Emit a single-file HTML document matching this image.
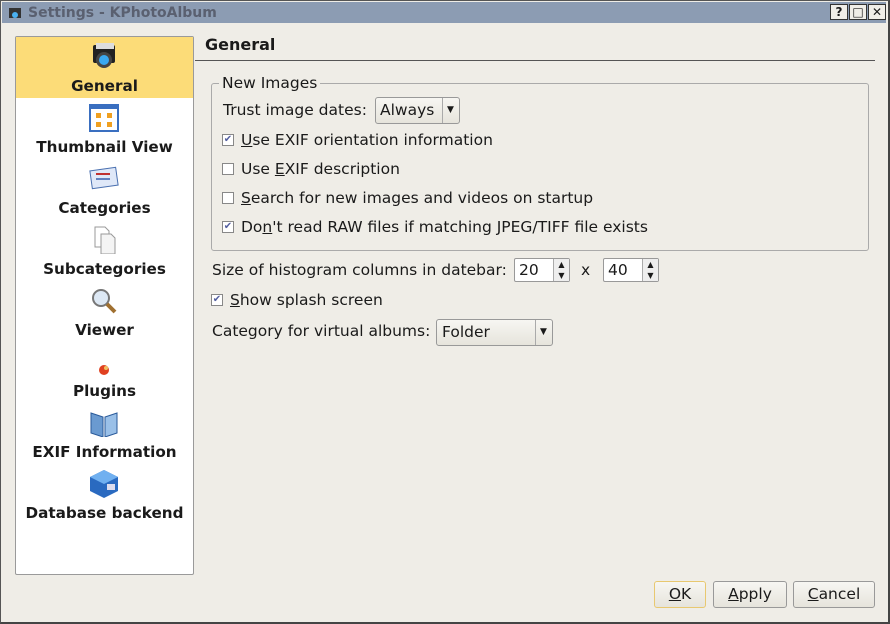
<!DOCTYPE html>
<html><head><style>
*{margin:0;padding:0;box-sizing:border-box}
body{width:890px;height:624px;background:#efede7;font-family:"DejaVu Sans","Liberation Sans",sans-serif;font-size:15.5px;color:#1a1a1a;position:relative;overflow:hidden}
.a{position:absolute;white-space:nowrap}
#win{position:absolute;left:0;top:0;width:890px;height:624px;border:1px solid #555;border-right:2px solid #444;border-bottom:2px solid #444}
#title{position:absolute;left:2px;top:2px;width:884px;height:21px;background:#8c9cb3;}
#title span{position:absolute;left:26px;top:3px;font-weight:bold;color:#5a6070;font-size:14px}
.tb{position:absolute;top:4px;width:18px;height:16px;background:#f0eee8;border:1px solid #333;font-size:12px;font-weight:bold;text-align:center;line-height:14px}
#side{position:absolute;left:15px;top:36px;width:179px;height:539px;background:#fff;border:1px solid #9a9a9a;border-radius:2px}
.it{position:absolute;left:0;width:177px;height:61px;text-align:center;font-weight:bold;font-size:15.2px}
.it b{position:absolute;left:0;right:0;bottom:3px}
.ic{position:absolute;left:73px;top:6px;width:30px;height:28px}
.cb{position:absolute;width:12px;height:12px;border:1px solid #888;background:#fff;font-size:10px;line-height:10px;text-align:center;color:#5560a0}
.btn{position:absolute;height:27px;border:1px solid #999;border-radius:3px;background:linear-gradient(#f7f6f2,#e6e4dc);text-align:center;line-height:25px}
.spin{position:absolute;height:24px;background:#fff;border:1px solid #999;border-radius:2px}
u{text-decoration:underline}
</style></head><body>
<div id="win"></div>
<div id="title"><svg class="a" style="left:5px;top:3px" width="16" height="16"><rect x="2" y="3" width="12" height="10" fill="#333"/><circle cx="8" cy="10" r="3" fill="#4ab0f0"/></svg><span>Settings - KPhotoAlbum</span></div>
<div class="tb" style="left:830px">?</div>
<div class="tb" style="left:849px">□</div>
<div class="tb" style="left:868px">✕</div>

<div id="side">
<div class="it" style="top:0;background:#fcdc78"><svg class="ic" viewBox="0 0 30 28"><rect x="4" y="2" width="22" height="18" fill="#222" rx="2"/><rect x="7" y="0" width="18" height="6" fill="#ddd"/><circle cx="15" cy="17" r="8" fill="#444"/><circle cx="15" cy="17" r="5" fill="#3aa8f0"/></svg><b>General</b></div>
<div class="it" style="top:61px"><svg class="ic" viewBox="0 0 30 28"><rect x="1" y="1" width="28" height="26" fill="#fff" stroke="#3a6fc0" stroke-width="2"/><rect x="1" y="1" width="28" height="4" fill="#3a6fc0"/><rect x="7" y="9" width="5" height="5" fill="#f0a020"/><rect x="18" y="9" width="5" height="5" fill="#f0a020"/><rect x="7" y="18" width="5" height="5" fill="#f0a020"/><rect x="18" y="18" width="5" height="5" fill="#f0a020"/></svg><b>Thumbnail View</b></div>
<div class="it" style="top:122px"><svg class="ic" viewBox="0 0 30 28"><rect x="2" y="4" width="26" height="18" fill="#dfe8f8" stroke="#4a70b0" transform="rotate(-8 15 13)"/><rect x="7" y="8" width="14" height="2" fill="#c03030"/><rect x="7" y="13" width="14" height="2" fill="#6080c0"/></svg><b>Categories</b></div>
<div class="it" style="top:183px"><svg class="ic" viewBox="0 0 30 28"><path d="M6 1h10l4 4v16H6z" fill="#fff" stroke="#999"/><path d="M12 8h10l4 4v16H12z" fill="#f4f4f4" stroke="#999"/></svg><b>Subcategories</b></div>
<div class="it" style="top:244px"><svg class="ic" viewBox="0 0 30 28"><circle cx="12" cy="11" r="8" fill="#dde8f4" stroke="#777" stroke-width="2"/><path d="M18 17l8 8" stroke="#a07030" stroke-width="4"/></svg><b>Viewer</b></div>
<div class="it" style="top:305px"><svg class="ic" viewBox="0 0 30 28"><circle cx="15" cy="22" r="5" fill="#e04020"/><circle cx="17" cy="20" r="2" fill="#f0c060"/></svg><b>Plugins</b></div>
<div class="it" style="top:366px"><svg class="ic" viewBox="0 0 30 28"><path d="M2 4l12 4v20L2 24z" fill="#6a9ad0" stroke="#2a5a9a"/><path d="M28 4l-12 4v20l12-4z" fill="#9ac0e8" stroke="#2a5a9a"/></svg><b>EXIF Information</b></div>
<div class="it" style="top:427px"><svg class="ic" viewBox="0 0 30 28"><path d="M15 0l14 7v14l-14 7-14-7V7z" fill="#2a6ac0"/><path d="M15 0l14 7-14 7-14-7z" fill="#70b0f0"/><rect x="18" y="14" width="8" height="6" fill="#dde"/></svg><b>Database backend</b></div>
</div>

<div class="a" style="left:205px;top:35px;font-weight:bold;font-size:16px">General</div>
<div class="a" style="left:195px;top:60px;width:680px;height:1px;background:#555"></div>

<div class="a" style="left:211px;top:83px;width:658px;height:168px;border:1px solid #aaa;border-radius:3px"></div>
<div class="a" style="left:219px;top:74px;background:#efede7;padding:0 3px">New Images</div>
<div class="a" style="left:223px;top:101px">Trust image dates:</div>
<div class="btn" style="left:375px;top:97px;width:85px;text-align:left;padding-left:4px">Always<span class="a" style="left:66px;top:0;width:1px;height:25px;background:#aaa"></span><span class="a" style="left:71px;top:0;font-size:9px">▼</span></div>
<div class="cb" style="left:222px;top:134px">✔</div><div class="a" style="left:241px;top:131px"><u>U</u>se EXIF orientation information</div>
<div class="cb" style="left:222px;top:163px"></div><div class="a" style="left:241px;top:160px">Use <u>E</u>XIF description</div>
<div class="cb" style="left:222px;top:192px"></div><div class="a" style="left:241px;top:189px"><u>S</u>earch for new images and videos on startup</div>
<div class="cb" style="left:222px;top:221px">✔</div><div class="a" style="left:241px;top:218px">Do<u>n</u>'t read RAW files if matching JPEG/TIFF file exists</div>

<div class="a" style="left:212px;top:261px">Size of histogram columns in datebar:</div>
<div class="spin" style="left:514px;top:258px;width:56px"><span class="a" style="left:4px;top:2px">20</span><span class="a" style="left:38px;top:0;width:16px;height:22px;border-left:1px solid #aaa;background:#eee;font-size:8px;line-height:11px;text-align:center">▲<br>▼</span></div>
<div class="a" style="left:581px;top:261px">x</div>
<div class="spin" style="left:603px;top:258px;width:56px"><span class="a" style="left:4px;top:2px">40</span><span class="a" style="left:38px;top:0;width:16px;height:22px;border-left:1px solid #aaa;background:#eee;font-size:8px;line-height:11px;text-align:center">▲<br>▼</span></div>

<div class="cb" style="left:211px;top:294px">✔</div><div class="a" style="left:230px;top:291px"><u>S</u>how splash screen</div>
<div class="a" style="left:212px;top:322px">Category for virtual albums:</div>
<div class="btn" style="left:436px;top:319px;width:117px;text-align:left;padding-left:5px">Folder<span class="a" style="left:98px;top:0;width:1px;height:25px;background:#aaa"></span><span class="a" style="left:103px;top:0;font-size:9px">▼</span></div>

<div class="btn" style="left:654px;top:581px;width:52px;border-color:#e8c870"><u>O</u>K</div>
<div class="btn" style="left:713px;top:581px;width:74px"><u>A</u>pply</div>
<div class="btn" style="left:793px;top:581px;width:82px"><u>C</u>ancel</div>
</body></html>
